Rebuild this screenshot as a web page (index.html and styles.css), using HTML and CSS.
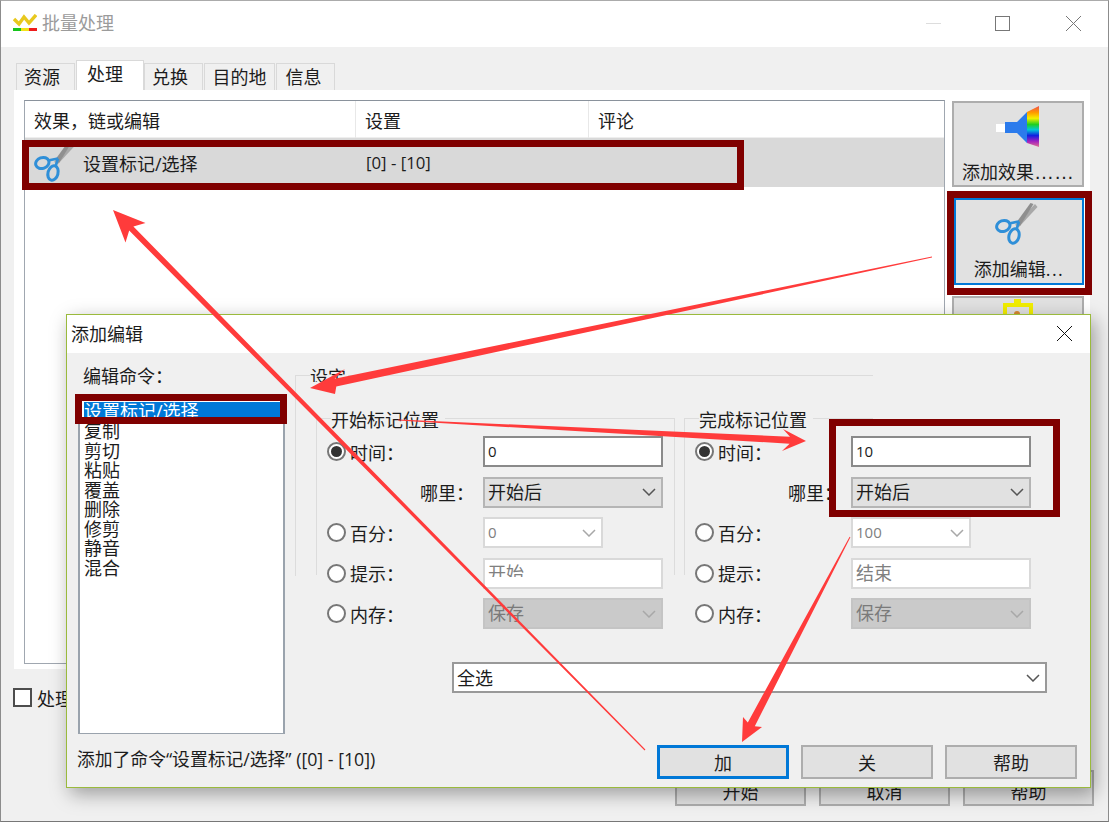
FILE: index.html
```html
<!DOCTYPE html>
<html lang="zh">
<head>
<meta charset="utf-8">
<title>批量处理</title>
<link rel="stylesheet" href="styles.css">
</head>
<body>
<svg class="defs" width="0" height="0" aria-hidden="true">
  <defs>
    <linearGradient id="rainbow" x1="0" y1="0" x2="0" y2="1">
      <stop offset="0" stop-color="#f05050"/>
      <stop offset=".16" stop-color="#ff9a00"/>
      <stop offset=".3" stop-color="#f5f000"/>
      <stop offset=".45" stop-color="#20d020"/>
      <stop offset=".58" stop-color="#00c8d8"/>
      <stop offset=".72" stop-color="#1020e0"/>
      <stop offset=".86" stop-color="#a020c0"/>
      <stop offset="1" stop-color="#e07090"/>
    </linearGradient>
    <symbol id="scissors" viewBox="0 0 44 44">
      <path d="M20 23 40 2 42.5 5 24 25Z" fill="#a8a8a8"/>
      <path d="M21 21 35.500 1 38.500 2 25 24Z" fill="#8f8f8f"/>
      <ellipse cx="8.300" cy="24" rx="6.800" ry="5.400" transform="rotate(-20 8.300 24)" fill="none" stroke="#2f8fd8" stroke-width="3"/>
      <ellipse cx="19" cy="34" rx="5" ry="7.400" transform="rotate(15 19 34)" fill="none" stroke="#2f8fd8" stroke-width="3"/>
      <path d="M14 21.500 24 19.500M21.500 27.500 24 19.500" stroke="#2f8fd8" stroke-width="2.600" fill="none"/>
    </symbol>
    <symbol id="chevron" viewBox="0 0 14 8">
      <polyline points="1,1 7,7 13,1" fill="none" stroke="currentColor" stroke-width="1.5"/>
    </symbol>
  </defs>
</svg>

<section class="window">
  <header class="titlebar">
    <svg class="logo" viewBox="0 0 24 18" aria-hidden="true">
      <polyline points="1,5 6,10 11,3 16,9 23,1" fill="none" stroke="#e8c81e" stroke-width="3.4"/>
      <rect x="0" y="14" width="8" height="3" fill="#16c41c"/>
      <rect x="8" y="14" width="8" height="3" fill="#f2e21a"/>
      <rect x="16" y="14" width="8" height="3" fill="#ee1c1c"/>
    </svg>
    <span class="title-text">批量处理</span>
    <div class="caption">
      <span class="cap-min"></span>
      <span class="cap-max"></span>
      <svg class="cap-close" viewBox="0 0 15 15" aria-hidden="true"><path d="M0 0 15 15M15 0 0 15" stroke="#777" fill="none"/></svg>
    </div>
  </header>

  <div class="client">
    <nav class="tabs">
      <span class="tab tab-a">资源</span>
      <span class="tab tab-active">处理</span>
      <span class="tab tab-a">兑换</span>
      <span class="tab tab-b">目的地</span>
      <span class="tab tab-c">信息</span>
    </nav>
    <div class="panel">
      <div class="list">
        <div class="list-head">
          <span class="col-a">效果，链或编辑</span>
          <span class="col-b">设置</span>
          <span class="col-c">评论</span>
        </div>
        <div class="list-row">
          <span class="col-a row-name"><svg class="row-icon"><use href="#scissors"/></svg>设置标记/选择</span>
          <span class="col-b row-val">[0] - [10]</span>
        </div>
      </div>
      <div class="side">
        <button class="side-btn" type="button">
          <svg class="side-icon" viewBox="0 0 44 44" aria-hidden="true">
            <rect x="0" y="19" width="9" height="8" fill="#fff"/>
            <polygon points="9,17 21,17 31,7 31,38 21,28 9,28" fill="#2b7bec"/>
            <polygon points="31,7 43,1 43,42 31,38" fill="url(#rainbow)"/>
          </svg>
          <span>添加效果<span class="dots-wide">……</span></span>
        </button>
        <button class="side-btn side-focus" type="button">
          <svg class="side-icon side-icon-shift"><use href="#scissors"/></svg>
          <span>添加编辑<span class="dots-narrow">...</span></span>
        </button>
        <button class="side-btn side-third" type="button">
          <svg class="side-icon-3" viewBox="0 0 30 20" aria-hidden="true">
            <rect x="11" y="0" width="7" height="7" fill="#f2ee00"/>
            <rect x="2" y="6" width="26" height="14" fill="none" stroke="#f2ee00" stroke-width="4"/>
            <circle cx="14" cy="15" r="3" fill="#d88a30"/>
          </svg>
        </button>
      </div>
    </div>
    <label class="check-row"><span class="checkbox"></span>处理</label>
    <footer class="win-foot">
      <button class="btn foot-btn" type="button">开始</button>
      <button class="btn foot-btn" type="button">取消</button>
      <button class="btn foot-btn" type="button">帮助</button>
    </footer>
  </div>
</section>

<section class="dialog">
  <header class="dlg-title">
    <span>添加编辑</span>
    <svg class="dlg-close" viewBox="0 0 15 15" aria-hidden="true"><path d="M0 0 15 15M15 0 0 15" stroke="#111" fill="none"/></svg>
  </header>
  <div class="dlg-main">
    <div class="cmd-col">
      <div class="cmd-label">编辑命令：</div>
      <ul class="cmd-list">
        <li class="cmd-sel">设置标记/选择</li>
        <li>复制</li>
        <li>剪切</li>
        <li>粘贴</li>
        <li>覆盖</li>
        <li>删除</li>
        <li>修剪</li>
        <li>静音</li>
        <li>混合</li>
      </ul>
    </div>
    <div class="settings">
      <div class="settings-legend">设定</div>
      <div class="groups">
        <div class="mark mark-start">
          <div class="mark-legend">开始标记位置</div>
          <div class="mark-grid">
            <span class="opt"><i class="radio radio-on"></i>时间：</span>
            <span class="field"><span class="num">0</span></span>
            <span class="where">哪里：</span>
            <span class="field select">开始后<svg class="chev"><use href="#chevron"/></svg></span>
            <span class="opt"><i class="radio"></i>百分：</span>
            <span class="field combo off"><span class="num">0</span><svg class="chev"><use href="#chevron"/></svg></span>
            <span class="opt"><i class="radio"></i>提示：</span>
            <span class="field off"><span class="clip">开始</span></span>
            <span class="opt"><i class="radio"></i>内存：</span>
            <span class="field select-off">保存<svg class="chev"><use href="#chevron"/></svg></span>
          </div>
        </div>
        <div class="mark mark-end">
          <div class="mark-legend">完成标记位置</div>
          <div class="mark-grid">
            <span class="opt"><i class="radio radio-on"></i>时间：</span>
            <span class="field"><span class="num">10</span></span>
            <span class="where">哪里：</span>
            <span class="field select">开始后<svg class="chev"><use href="#chevron"/></svg></span>
            <span class="opt"><i class="radio"></i>百分：</span>
            <span class="field combo off"><span class="num">100</span><svg class="chev"><use href="#chevron"/></svg></span>
            <span class="opt"><i class="radio"></i>提示：</span>
            <span class="field off">结束</span>
            <span class="opt"><i class="radio"></i>内存：</span>
            <span class="field select-off">保存<svg class="chev"><use href="#chevron"/></svg></span>
          </div>
        </div>
      </div>
      <div class="field scope">全选<svg class="chev"><use href="#chevron"/></svg></div>
    </div>
  </div>
  <footer class="dlg-foot">
    <span class="status">添加了命令“设置标记/选择” ([0] - [10])</span>
    <div class="dlg-btns">
      <button class="btn dlg-btn dlg-default" type="button">加</button>
      <button class="btn dlg-btn" type="button">关</button>
      <button class="btn dlg-btn" type="button">帮助</button>
    </div>
  </footer>
</section>

<div class="mark-box box-row"></div>
<div class="mark-box box-edit"></div>
<div class="mark-box box-cmd"></div>
<div class="mark-box box-fields"></div>

<svg class="arrows" viewBox="0 0 1109 822" aria-hidden="true">
  <polygon points="645.4,749.6 133.4,226.4 145.5,223 113,210 125.5,242.6 129.2,230.6 644.6,750.4"/>
  <polygon points="932,256.5 334.7,378.7 345,369 310,388 335,394 336.3,386.5 932,257.5"/>
  <polygon points="398,419.5 790,436.7 783,429 806,441 782,451 789.6,443.7 398,420.5"/>
  <polygon points="850.4,537.2 754.8,726.2 762,727 742,742 743,717 747.8,722.4 849.6,536.8"/>
</svg>
</body>
</html>
```

FILE: styles.css
```css
* { box-sizing: border-box; }
html, body { margin: 0; padding: 0; }
body {
  width: 1109px;
  height: 822px;
  overflow: hidden;
  position: relative;
  font-family: "Open Sans", "Noto Sans CJK SC", sans-serif;
  font-size: 18px;
  color: #1c1c1c;
  background: #f0f0f0;
}
.defs { position: absolute; }
button { font: inherit; color: inherit; padding: 0; }

/* main window */
.window {
  width: 1109px;
  height: 822px;
  display: flex;
  flex-direction: column;
  border: 1px solid #8c8c8c;
  border-top-color: #ababab;
  border-bottom-color: #777;
}
.titlebar {
  height: 46px;
  flex: none;
  background: #fff;
  display: flex;
  align-items: center;
  padding: 0 0 2px 12px;
}
.logo { width: 24px; height: 18px; margin-right: 5px; }
.title-text { color: #9b9b9b; line-height: 44px; }
.caption { margin-left: auto; display: flex; align-items: center; padding-right: 27px; }
.cap-min { width: 15px; height: 1px; background: #ddd; margin-right: 54px; }
.cap-max { width: 15px; height: 15px; border: 1px solid #777; margin-right: 56px; }
.cap-close { width: 15px; height: 15px; }
.client { flex: 1; background: #f0f0f0; padding: 13px 0 0 13px; display: flex; flex-direction: column; }
.tabs { display: flex; align-items: flex-end; height: 30px; flex: none; padding-left: 2px; }
.tab {
  height: 27px;
  background: #f0f0f0;
  border: 1px solid #d9d9d9;
  border-bottom: 0;
  margin-right: 1px;
  line-height: 27px;
  text-align: center;
  font-size: 18px;
}
.tab-a { width: 59px; padding-right: 7px; }
.tab-b { width: 71px; }
.tab-c { width: 59px; padding-right: 4px; }
.tab-active { width: 68px; height: 30px; line-height: 27px; background: #fff; margin-right: 0; padding-right: 10px; }
.panel {
  width: 1076px;
  height: 579px;
  flex: none;
  background: #fff;
  padding: 10px 6px 5px 10px;
  display: flex;
  gap: 7px;
}
.list {
  width: 921px;
  height: 564px;
  border: 1px solid #a0a7b0;
  border-top-color: #8a929c;
  background: #fff;
}
.list-head {
  height: 37px;
  display: grid;
  grid-template-columns: 331px 233px 1fr;
  align-items: center;
  border-bottom: 1px solid #eee;
}
.list-head span { line-height: 37px; height: 37px; padding: 2px 0 0 9px; border-right: 1px solid #e8e8e8; }
.list-head .col-c { border-right: 0; }
.list-row {
  height: 49px;
  background: #d9d9d9;
  display: grid;
  grid-template-columns: 331px 233px 1fr;
  align-items: center;
}
.row-name { display: flex; align-items: center; padding-left: 9px; }
.row-icon { width: 44px; height: 44px; margin: 0 5px 4px 0; flex: none; }
.row-val { font-size: 16.8px; padding-left: 10px; }
.side { width: 132px; padding-top: 1px; display: flex; flex-direction: column; gap: 11px; overflow: hidden; height: 228px; }
.side-btn {
  width: 132px;
  height: 86px;
  flex: none;
  background: #e1e1e1;
  border: 2px solid #adadad;
  display: flex;
  flex-direction: column;
  align-items: center;
  font-size: 18px;
  line-height: 24px;
}
.side-icon { width: 44px; height: 44px; margin: 2px 0 11px; flex: none; }
.side-icon-shift { margin-right: 4px; }
.side-focus { width: 130px; height: 87px; margin-left: 2px; border-color: #0078d7; }
.side-third { flex: none; }
.side-icon-3 { width: 30px; height: 20px; margin-top: 1px; flex: none; }
.dots-wide { font-family: "Liberation Sans", sans-serif; font-size: 20px; }
.dots-narrow { letter-spacing: 1.4px; }
.check-row { display: flex; align-items: center; height: 19px; margin: 19px 0 0 -1px; }
.checkbox { width: 19px; height: 19px; border: 2px solid #4d4d4d; background: #fff; margin-right: 5px; }
.win-foot { display: flex; gap: 13px; margin: 63px 0 0 661px; }
.btn { background: #e1e1e1; border: 2px solid #adadad; text-align: center; }
.foot-btn { width: 131px; height: 36px; padding-top: 6px; }

/* dialog */
.dialog {
  position: absolute;
  left: 66px;
  top: 314px;
  width: 1025px;
  height: 474px;
  display: flex;
  flex-direction: column;
  background: #f0f0f0;
  border: 1px solid #9aba3c;
  box-shadow: 4px 6px 18px rgba(0, 0, 0, .35);
}
.dlg-title {
  height: 38px;
  flex: none;
  background: #fff;
  display: flex;
  align-items: center;
  justify-content: space-between;
  padding: 0 18px 2px 4px;
}
.dlg-close { width: 15px; height: 15px; }
.dlg-main { display: flex; padding: 14px 0 0 11px; gap: 10px; height: 381px; flex: none; }
.cmd-col { width: 207px; flex: none; }
.cmd-label { height: 20px; line-height: 18px; padding-left: 5px; }
.cmd-list {
  list-style: none;
  margin: 8px 0 0;
  padding: 5px 2px 5px 4px;
  height: 339px;
  background: #fff;
  border: 2px solid #9aa3ad;
  border-bottom-width: 1px;
}
.cmd-list li { height: 19.5px; line-height: 18px; white-space: nowrap; }
.cmd-list .cmd-sel { background: #0078d7; color: #fff; height: 20px; margin-right: 1px; }
.settings { position: relative; flex: 1; min-width: 0; }
.settings::before {
  content: "";
  position: absolute;
  left: 0;
  top: 8px;
  width: 577px;
  height: 200px;
  border-top: 1px solid #dcdcdc;
  border-left: 1px solid #dcdcdc;
}
.settings-legend {
  position: relative;
  height: 15px;
  line-height: 20px;
  overflow: hidden;
  width: 38px;
  margin-left: 15px;
  background: #f0f0f0;
}
.groups { display: flex; margin: 27px 0 0 22px; }
.mark { position: relative; width: 368px; padding-left: 10px; flex: none; }
.mark::before {
  content: "";
  position: absolute;
  left: -1px;
  top: 9px;
  height: 156px;
  border: 1px solid #dcdcdc;
  border-bottom: 0;
}
.mark-start::before { width: 357px; }
.mark-end::before { width: 188px; border-right: 0; }
.mark-legend {
  position: relative;
  height: 20px;
  line-height: 22px;
  margin: 0 0 7px 4px;
  background: #f0f0f0;
  width: 114px;
}
.mark-grid {
  position: relative;
  display: grid;
  grid-template-columns: 156px 180px;
  grid-auto-rows: 31px;
  row-gap: 9.5px;
  align-items: center;
}
.opt { display: flex; align-items: center; white-space: nowrap; }
.radio {
  width: 19px;
  height: 19px;
  border-radius: 50%;
  border: 2px solid #777;
  background: #fff;
  margin-right: 4px;
  position: relative;
  flex: none;
}
.radio-on::after {
  content: "";
  position: absolute;
  left: 2px;
  top: 2px;
  width: 11px;
  height: 11px;
  border-radius: 50%;
  background: #333;
}
.where { text-align: right; padding-right: 9px; }
.field {
  height: 31px;
  width: 180px;
  background: #fff;
  border: 2px solid #8a8a8a;
  padding-left: 3px;
  display: flex;
  align-items: center;
  line-height: 27px;
  position: relative;
}
.num { font-size: 15px; }
.select { background: #e1e1e1; border-color: #b5b5b5; }
.off { border-color: #d9d9d9; color: #808080; }
.combo { width: 120px; }
.select-off { background: #cacaca; border-color: #c4c4c4; color: #7a7a7a; }
.clip { display: block; height: 13px; line-height: 18px; overflow: hidden; margin-top: -6px; }
.chev { width: 14px; height: 8px; margin-left: auto; margin-right: 5px; color: #555; flex: none; }
.off .chev, .select-off .chev { color: #a8a8a8; }
.scope { width: 595px; margin: 33px 0 0 157px; padding-top: 1px; border-color: #999; }
.dlg-foot { display: flex; justify-content: space-between; align-items: center; padding: 11px 13px 0 10px; }
.status { font-size: 17.8px; white-space: nowrap; margin-top: -9px; }
.dlg-btns { display: flex; gap: 12px; }
.dlg-btn { width: 132px; height: 34px; }
.dlg-default { border: 3px solid #0078d7; }

/* annotations */
.mark-box { position: absolute; border: 7px solid #800000; }
.box-row { left: 22px; top: 140px; width: 722px; height: 50px; }
.box-edit { left: 947px; top: 191px; width: 145px; height: 104px; }
.box-cmd { left: 75px; top: 394px; width: 212px; height: 30px; }
.box-fields { left: 829px; top: 419px; width: 231px; height: 98px; }
.arrows { position: absolute; left: 0; top: 0; width: 1109px; height: 822px; pointer-events: none; }
.arrows polygon { fill: #ff3b3b; }
```
